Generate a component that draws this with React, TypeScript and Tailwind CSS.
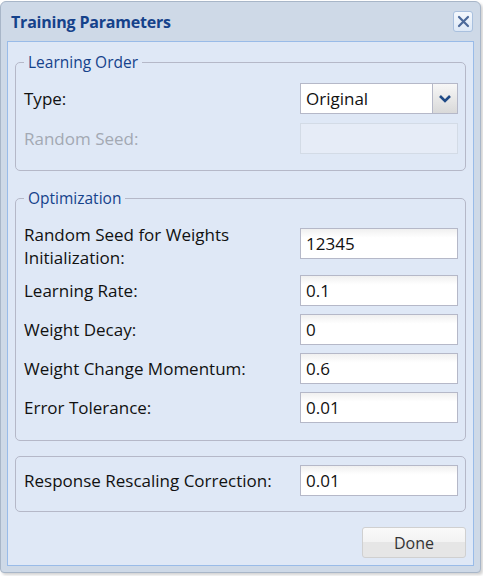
import { ReactNode } from 'react';

const FONT = { fontFamily: '"Open Sans", "Noto Sans", "Liberation Sans", sans-serif' };

// 입력 행
function Row({
  label,
  value,
  disabled,
  top,
  className,
}: {
  label: ReactNode;
  value?: string;
  disabled?: boolean;
  top?: boolean;
  className?: string;
}) {
  return (
    <div className={['flex justify-between', top ? 'items-start' : 'items-center', className ?? ''].join(' ')}>
      <span className={['text-[17px]', top ? 'leading-[23px]' : 'leading-[20px]', disabled ? 'text-[#a3a9b3]' : 'text-[#111]'].join(' ')}>
        {label}
      </span>
      {disabled ? (
        <div className="w-[158px] h-[31px] border border-[#d3dbe6] bg-[#e6ecf7]" />
      ) : (
        <div
          className={[
            'w-[158px] h-[31px] border border-[#b5b8c8] bg-gradient-to-b from-[#f0f0f0] to-white to-[30%] flex items-center px-[5px] text-[17px] text-[#111]',
            top ? 'mt-[5px]' : '',
          ].join(' ')}
        >
          {value}
        </div>
      )}
    </div>
  );
}

export default function App() {
  return (
    <div className="w-[483px] h-[576px] bg-white relative overflow-hidden" style={FONT}>
      {/* 창 */}
      <div className="absolute left-0 top-[1px] w-[481px] h-[572px] rounded-t-[6px] rounded-b-[4px] border border-[#a8b6c8] bg-[#ced9e7] shadow-[2px_2px_3px_rgba(0,0,0,0.18)] flex flex-col">
        {/* 헤더 */}
        <div className="h-[39px] flex items-center justify-between pl-[10px] pr-[7px]">
          <span className="text-[16px] font-bold text-[#15428b] tracking-[-0.2px]">Training Parameters</span>
          <button className="w-[20px] h-[21px] border border-[#a9c0de] rounded-[3px] bg-gradient-to-b from-[#f4f8fd] to-[#dde8f6] flex items-center justify-center">
            <svg width="13" height="13" viewBox="0 0 13 13">
              <path d="M2 2 L11 11 M11 2 L2 11" stroke="#4d6a9a" strokeWidth="2.2" strokeLinecap="round" />
            </svg>
          </button>
        </div>

        {/* 본문 */}
        <div className="mx-[6px] mb-[6px] flex-1 border border-[#99bbe8] bg-[#dfe8f6] pl-[7px] pr-[7px] pt-[10px] flex flex-col">
          <fieldset className="border border-[#b5b8c8] rounded-[5px] pl-[8px] pr-[7px] pt-[11px] pb-[16px]">
            <legend className="px-[4px] text-[15.5px] text-[#15428b] leading-[20px]">Learning Order</legend>
            <div className="flex items-center justify-between">
              <span className="text-[17px] text-[#111]">Type:</span>
              <div className="w-[158px] h-[31px] border border-[#b5b8c8] bg-white flex">
                <div className="flex-1 flex items-center px-[5px] text-[17px] text-[#111]">Original</div>
                <div className="w-[25px] border-l border-[#b5b8c8] bg-gradient-to-b from-[#f7f7f7] to-[#d9d9d9] flex items-center justify-center">
                  <svg width="12" height="8" viewBox="0 0 12 8">
                    <path d="M1 1 L6 6 L11 1" stroke="#1f4a86" strokeWidth="2.6" fill="none" />
                  </svg>
                </div>
              </div>
            </div>
            <Row label="Random Seed:" disabled className="mt-[9px]" />
          </fieldset>

          <fieldset className="mt-[17px] border border-[#b5b8c8] rounded-[5px] pl-[8px] pr-[7px] pt-[15px] pb-[17px] flex flex-col gap-[8px]">
            <legend className="px-[4px] text-[15.5px] text-[#15428b] leading-[20px]">Optimization</legend>
            <Row
              label={
                <>
                  Random Seed for Weights
                  <br />
                  Initialization:
                </>
              }
              value="12345"
              top
              className="h-[44px]"
            />
            <Row label="Learning Rate:" value="0.1" />
            <Row label="Weight Decay:" value="0" />
            <Row label="Weight Change Momentum:" value="0.6" />
            <Row label="Error Tolerance:" value="0.01" />
          </fieldset>

          <fieldset className="mt-[15px] border border-[#b5b8c8] rounded-[5px] pl-[8px] pr-[7px] pt-[8px] pb-[15px]">
            <Row label="Response Rescaling Correction:" value="0.01" />
          </fieldset>

          <div className="flex justify-end mt-[15px]">
            <button className="w-[104px] h-[31px] rounded-[3px] border border-[#d0d0d0] bg-[linear-gradient(to_bottom,#fafafa_0%,#f3f3f3_48%,#e6e6e6_50%,#e6e6e6_100%)] text-[16px] text-[#333]">
              Done
            </button>
          </div>
        </div>
      </div>
    </div>
  );
}
